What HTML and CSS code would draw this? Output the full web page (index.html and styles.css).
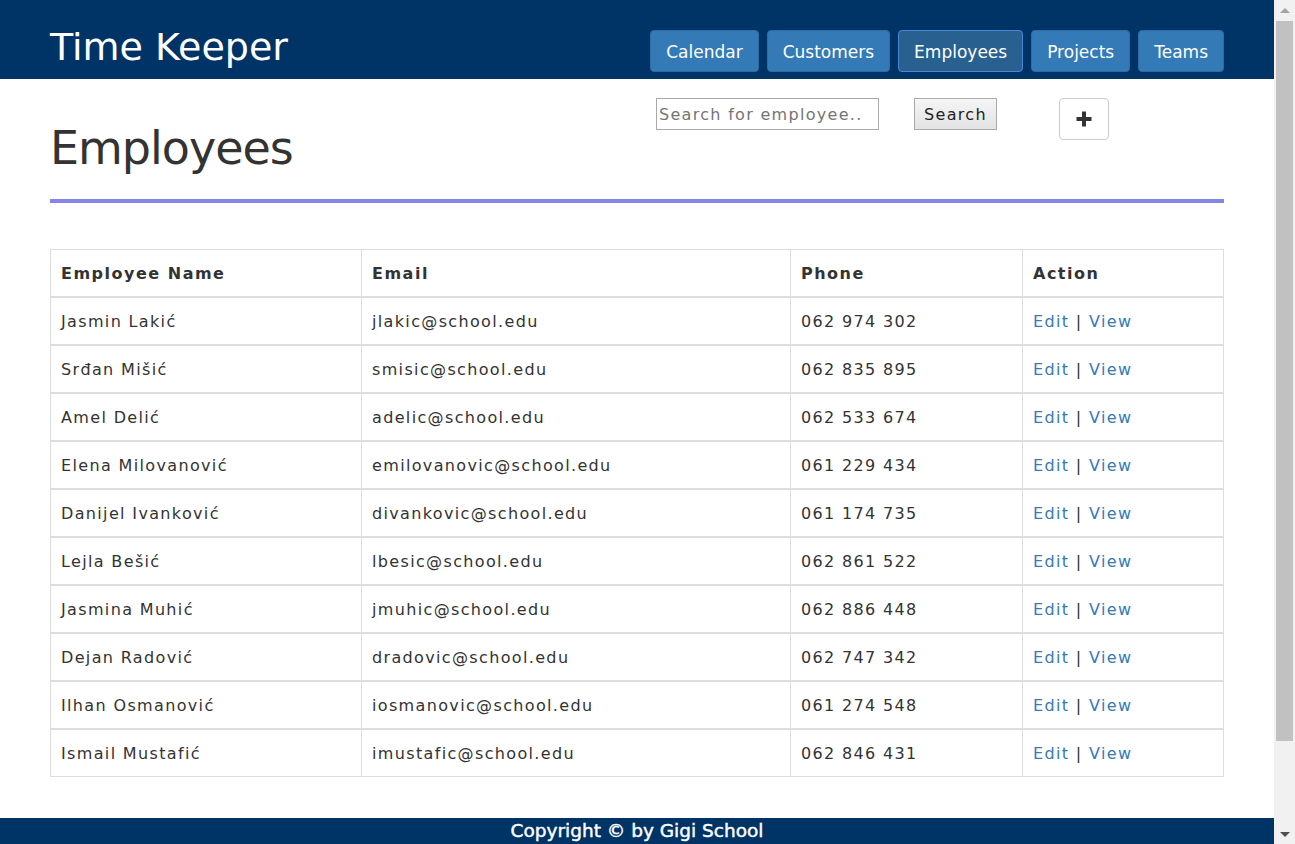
FILE: index.html
```html
<!DOCTYPE html>
<html lang="en">
<head>
<meta charset="utf-8">
<title>Time Keeper - Employees</title>
<link rel="stylesheet" href="styles.css">
</head>
<body>
<div class="viewport">
<header class="topbar">
  <div class="brand">Time Keeper</div>
  <nav class="menu">
    <a class="menu-btn" href="#">Calendar</a>
    <a class="menu-btn" href="#">Customers</a>
    <a class="menu-btn active" href="#">Employees</a>
    <a class="menu-btn" href="#">Projects</a>
    <a class="menu-btn" href="#">Teams</a>
  </nav>
</header>
<main class="page">
  <div class="page-head">
    <h1 class="page-title">Employees</h1>
    <div class="tools">
      <form class="search">
        <input class="search-input" type="text" placeholder="Search for employee..">
        <button class="search-btn" type="button">Search</button>
      </form>
      <button class="add-btn" type="button" aria-label="Add">
        <svg width="18" height="18" viewBox="0 0 18 18"><path d="M7 1.5h4v5.5h5.5v4H11v5.5H7V11H1.5V7H7z" fill="#333"/></svg>
      </button>
    </div>
  </div>
  <hr class="rule">
  <table class="grid">
    <thead>
      <tr><th class="c-name">Employee Name</th><th class="c-mail">Email</th><th class="c-phone">Phone</th><th class="c-act">Action</th></tr>
    </thead>
    <tbody>
      <tr><td>Jasmin Lakić</td><td>jlakic@school.edu</td><td>062 974 302</td><td><a href="#">Edit</a> | <a href="#">View</a></td></tr>
      <tr><td>Srđan Mišić</td><td>smisic@school.edu</td><td>062 835 895</td><td><a href="#">Edit</a> | <a href="#">View</a></td></tr>
      <tr><td>Amel Delić</td><td>adelic@school.edu</td><td>062 533 674</td><td><a href="#">Edit</a> | <a href="#">View</a></td></tr>
      <tr><td>Elena Milovanović</td><td>emilovanovic@school.edu</td><td>061 229 434</td><td><a href="#">Edit</a> | <a href="#">View</a></td></tr>
      <tr><td>Danijel Ivanković</td><td>divankovic@school.edu</td><td>061 174 735</td><td><a href="#">Edit</a> | <a href="#">View</a></td></tr>
      <tr><td>Lejla Bešić</td><td>lbesic@school.edu</td><td>062 861 522</td><td><a href="#">Edit</a> | <a href="#">View</a></td></tr>
      <tr><td>Jasmina Muhić</td><td>jmuhic@school.edu</td><td>062 886 448</td><td><a href="#">Edit</a> | <a href="#">View</a></td></tr>
      <tr><td>Dejan Radović</td><td>dradovic@school.edu</td><td>062 747 342</td><td><a href="#">Edit</a> | <a href="#">View</a></td></tr>
      <tr><td>Ilhan Osmanović</td><td>iosmanovic@school.edu</td><td>061 274 548</td><td><a href="#">Edit</a> | <a href="#">View</a></td></tr>
      <tr><td>Ismail Mustafić</td><td>imustafic@school.edu</td><td>062 846 431</td><td><a href="#">Edit</a> | <a href="#">View</a></td></tr>
    </tbody>
  </table>
</main>
<footer class="foot">Copyright © by Gigi School</footer>
</div>
<div class="scrollbar" aria-hidden="true">
  <div class="sb-arrow sb-up"></div>
  <div class="sb-track"><div class="sb-thumb"></div></div>
  <div class="sb-arrow sb-down"></div>
</div>
</body>
</html>
```
FILE: styles.css
```css
html, body {
  margin: 0;
  padding: 0;
}
body {
  font-family: "DejaVu Sans", Verdana, sans-serif;
  font-size: 16px;
  color: #333;
  background: #fff;
}
.viewport {
  margin-right: 21px;
}
.topbar {
  background: #003366;
  height: 79px;
  display: flex;
  justify-content: space-between;
  align-items: flex-start;
  padding: 0 50px;
  box-sizing: border-box;
}
.brand {
  color: #fff;
  font-size: 38px;
  line-height: 1;
  padding-top: 28px;
}
.menu {
  display: flex;
  gap: 8px;
  padding-top: 30px;
}
.menu-btn {
  display: block;
  height: 42px;
  line-height: 42px;
  padding: 0 15px;
  box-sizing: border-box;
  background: #337ab7;
  border: 1px solid #2e6da4;
  border-radius: 4px;
  color: #fff;
  text-decoration: none;
  font-size: 17px;
}
.menu-btn.active {
  background: #286090;
  border-color: #4a86d6;
}
.page {
  padding: 0 50px 172px;
}
.page-head {
  display: flex;
  align-items: flex-start;
}
.page-title {
  flex: 1;
  margin: 0;
  padding-top: 46px;
  font-size: 46px;
  letter-spacing: -1px;
  font-weight: normal;
  line-height: 1;
}
.tools {
  display: flex;
  align-items: flex-start;
  padding-top: 19px;
  margin-right: 115px;
}
.search {
  display: flex;
  margin: 0 62px 0 0;
}
.search-input {
  width: 223px;
  height: 32px;
  box-sizing: border-box;
  border: 1px solid #a9a9a9;
  padding: 1px 2px;
  font-family: "DejaVu Sans", Verdana, sans-serif;
  font-size: 16px;
  letter-spacing: 1.3px;
  color: #333;
  margin-right: 35px;
}
.search-input::placeholder {
  color: #757575;
}
.search-btn {
  width: 83px;
  height: 32px;
  box-sizing: border-box;
  border: 1px solid #a9a9a9;
  background: linear-gradient(#f5f5f5, #e3e3e3);
  font-family: "DejaVu Sans", Verdana, sans-serif;
  font-size: 16px;
  letter-spacing: 1.3px;
  color: #222;
  padding: 0;
}
.add-btn {
  width: 50px;
  height: 42px;
  box-sizing: border-box;
  border: 1px solid #ccc;
  border-radius: 4px;
  background: #fff;
  padding: 0;
  display: flex;
  align-items: center;
  justify-content: center;
}
.rule {
  border: 0;
  height: 4px;
  background: #8585e6;
  margin: 28px 0 46px;
}
.grid {
  width: 100%;
  border-collapse: collapse;
  border: 1px solid #ddd;
}
.grid th, .grid td {
  text-align: left;
  padding: 0 10px;
  height: 46px;
  border-left: 1px solid #ddd;
  border-right: 1px solid #ddd;
  border-top: 2px solid #ddd;
  letter-spacing: 1.35px;
  white-space: nowrap;
}
.grid thead th {
  border-top: 1px solid #ddd;
  height: 46px;
  font-weight: bold;
  letter-spacing: 1.5px;
}
.c-name { width: 290px; }
.c-mail { width: 408px; }
.c-phone { width: 211px; }
.grid a {
  color: #337ab7;
  text-decoration: none;
}
.foot {
  position: fixed;
  left: 0;
  right: 21px;
  bottom: 0;
  height: 26px;
  line-height: 26px;
  background: #003366;
  color: #fff;
  text-align: center;
  font-size: 18.5px;
  -webkit-text-stroke: 0.45px #fff;
}
.scrollbar {
  position: fixed;
  top: 0;
  right: 0;
  bottom: 0;
  width: 21px;
  background: #f1f1f1;
  display: flex;
  flex-direction: column;
}
.sb-arrow {
  height: 20px;
  flex: none;
  position: relative;
}
.sb-arrow::after {
  content: "";
  position: absolute;
  left: 6px;
  width: 0;
  height: 0;
  border-left: 5px solid transparent;
  border-right: 5px solid transparent;
}
.sb-up::after {
  top: 8px;
  border-bottom: 5px solid #a3a3a3;
}
.sb-down::after {
  top: 8px;
  border-top: 5px solid #505050;
}
.sb-track {
  flex: 1;
  padding: 1px 2px 0;
}
.sb-thumb {
  height: 720px;
  background: #c1c1c1;
}
```
